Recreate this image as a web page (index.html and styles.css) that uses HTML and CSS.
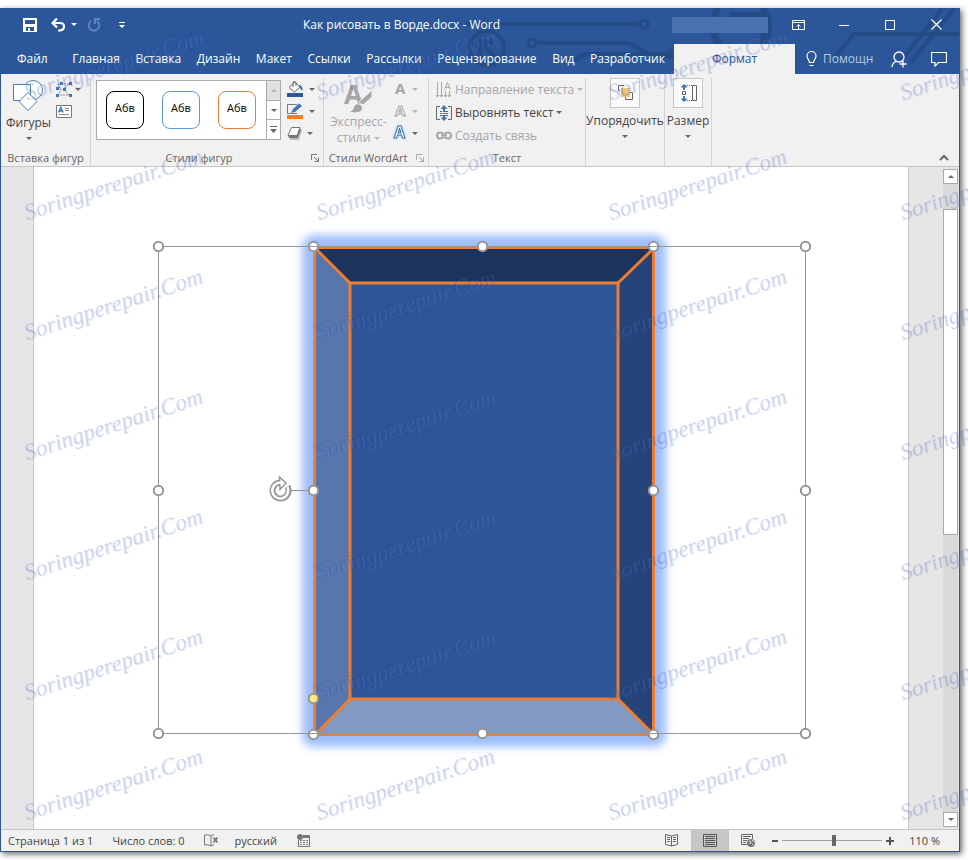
FILE: index.html
```html
<!DOCTYPE html>
<html lang="ru">
<head>
  <meta charset="UTF-8">
  <meta name="viewport" content="width=device-width, initial-scale=1.0">
  <title>Как рисовать в Ворде.docx - Word</title>
  <link rel="stylesheet" href="styles.css">
</head>
<body>
  <div class="window">

    <header class="header">
      <svg class="circuit" width="958" height="66" viewBox="1 8 958 66" fill="none" stroke="#244b86" stroke-width="4">
        <path d="M465 24H640M538 43H628L655 57H672M574 61Q580 54 592 54H672" />
        <circle cx="644" cy="24" r="4" stroke-width="3" />
        <circle cx="532" cy="43" r="4" stroke-width="3" />
        <circle cx="671" cy="54" r="4" stroke-width="3" />
        <circle cx="487" cy="48" r="17" />
        <path d="M480 56V42H494M480 42L496 58" stroke-width="5" />
        <path d="M718 8Q705 32 725 52M762 8Q775 26 762 44M729 16H764V42" stroke-width="7" />
        <path d="M835 57L854 34H960M900 62L942 9M911 62L954 9" />
      </svg>

      <div class="title-row">
        <div class="quick-access">
          <button class="qa-btn" aria-label="Сохранить">
            <svg width="14" height="14" viewBox="0 0 14 14"><path d="M0 0H14V14H0ZM2 2V6H12V2ZM3 9V13H5V10H7V13H11V9Z" fill="#fff" fill-rule="evenodd" /></svg>
          </button>
          <button class="qa-btn undo" aria-label="Отменить">
            <svg width="15" height="14" viewBox="0 0 15 14" fill="none" stroke="#fff" stroke-width="2.200"><path d="M2 5H9Q13 5 13 8.500T9 12.500H7M6 .5L1.500 5L6 9.500" /></svg>
            <i class="caret"></i>
          </button>
          <button class="qa-btn" aria-label="Повторить">
            <svg width="14" height="14" viewBox="0 0 14 14" fill="none" stroke="#5f83ba" stroke-width="2"><path d="M4 3A5.300 5.300 0 1 0 10 3M8 6V1H13" /></svg>
          </button>
          <button class="qa-btn more" aria-label="Настройка панели">
            <svg width="6" height="6" viewBox="0 0 6 6" fill="#fff"><path d="M0 0H6V1H0ZM0 3H6L3 6Z" /></svg>
          </button>
        </div>
        <h1 class="title">Как рисовать в Ворде.docx - Word</h1>
        <div class="account"></div>
        <div class="window-buttons">
          <button aria-label="Параметры ленты">
            <svg width="13" height="10" viewBox="0 0 13 10" fill="none" stroke="#fff"><path d="M.5 .5H12.500V9.500H.5ZM.5 2.500H12.500M6.500 9V4.500M4.500 6.500L6.500 4.500L8.500 6.500" /></svg>
          </button>
          <button aria-label="Свернуть">
            <svg width="10" height="10" viewBox="0 0 10 10" stroke="#fff"><path d="M0 5.500H10" /></svg>
          </button>
          <button aria-label="Развернуть">
            <svg width="10" height="10" viewBox="0 0 10 10" fill="none" stroke="#fff"><path d="M.5 .5H9.500V9.500H.5Z" /></svg>
          </button>
          <button aria-label="Закрыть">
            <svg width="11" height="11" viewBox="0 0 11 11" stroke="#fff" stroke-width="1.200"><path d="M.5 .5L10.500 10.500M10.500 .5L.5 10.500" /></svg>
          </button>
        </div>
      </div>

      <nav class="tab-row">
        <div class="tabs">
          <button class="tab file">Файл</button>
          <button class="tab">Главная</button>
          <button class="tab">Вставка</button>
          <button class="tab">Дизайн</button>
          <button class="tab">Макет</button>
          <button class="tab">Ссылки</button>
          <button class="tab">Рассылки</button>
          <button class="tab">Рецензирование</button>
          <button class="tab">Вид</button>
          <button class="tab">Разработчик</button>
        </div>
        <button class="tab active">Формат</button>
        <label class="tell-me">
          <svg width="11" height="16" viewBox="0 0 11 16" fill="none" stroke="#fff" stroke-width="1.200"><path d="M3.500 11.500C3.500 9 1 8 1 5A4.500 4.500 0 0 1 10 5C10 8 7.500 9 7.500 11.500ZM3.500 14.500H7.500" /></svg>
          <input type="text" placeholder="Помощн" aria-label="Помощник">
        </label>
        <button class="icon-btn" aria-label="Общий доступ">
          <svg width="16" height="17" viewBox="0 0 16 17" fill="none" stroke="#fff" stroke-width="1.300"><circle cx="8" cy="6" r="5" /><path d="M1 16Q1.500 11.500 5 10.500M10 10L11 11M12 9.500V16.500M8.500 13H15.500" /></svg>
        </button>
        <button class="icon-btn" aria-label="Примечания">
          <svg width="16" height="15" viewBox="0 0 16 15" fill="none" stroke="#fff" stroke-width="1.200"><path d="M.5 .5H15.500V10.500H7.500L4 14V10.500H.5Z" /></svg>
        </button>
      </nav>
    </header>

    <section class="ribbon">
      <div class="group insert-group">
        <div class="group-body">
          <button class="big-btn">
            <svg width="31" height="32" viewBox="0 0 31 32" stroke="#4a7fb5" fill="#fff"><circle cx="20" cy="10" r="9.500" /><path d="M.5 4.500H17.500V20.500H.5Z" /><path d="M15 12.500L24 21.500L15 30.500L6 21.500Z" /></svg>
            <span>Фигуры</span>
            <i class="caret"></i>
          </button>
          <div class="tool-column">
            <button class="tool" aria-label="Изменить фигуру">
              <svg width="16" height="15" viewBox="0 0 16 15"><path d="M2 2L13 2L8 7L13 13H2L5 8Z" fill="none" stroke="#888" stroke-dasharray="2 1" /><path d="M0 5H3V8H0ZM4 0H7V3H4ZM13 0H16V3H13ZM7 6H10V9H7ZM0 12H3V15H0ZM13 12H16V15H13Z" fill="#3b78b5" /></svg>
              <i class="caret"></i>
            </button>
            <button class="tool" aria-label="Надпись">
              <svg width="16" height="13" viewBox="0 0 16 13" fill="none"><path d="M.5 .5H15.500V12.500H.5Z" fill="#fff" stroke="#777" /><path d="M9 3.500H13M9 5.500H13M3 9.500H13" stroke="#888" /><path d="M2.500 7.500L4.800 2.500L7.200 7.500M3.500 6H6.500" stroke="#3b78b5" stroke-width="1.400" /></svg>
            </button>
          </div>
        </div>
        <div class="group-label">Вставка фигур</div>
      </div>

      <div class="group styles-group">
        <div class="group-body">
          <div class="gallery">
            <button class="style-tile black">Абв</button>
            <button class="style-tile blue">Абв</button>
            <button class="style-tile orange">Абв</button>
            <div class="gallery-scroll">
              <button class="disabled" aria-label="Вверх"><i class="caret up"></i></button>
              <button aria-label="Вниз"><i class="caret"></i></button>
              <button aria-label="Все стили"><svg width="7" height="7" viewBox="0 0 7 7" fill="#666"><path d="M0 0H7V1H0ZM0 3H7L3.500 7Z" /></svg></button>
            </div>
          </div>
          <div class="tool-column">
            <button class="tool" aria-label="Заливка фигуры">
              <svg width="17" height="16" viewBox="0 0 17 16"><path d="M2 6.500L8 1L13 6L7.500 11Z" fill="#fff" stroke="#666" /><path d="M6 6V1.500Q7.500 -.5 9 1.500V5" fill="none" stroke="#666" /><path d="M12 4Q16 4 15.500 10Q13 8 12 6Z" fill="#3b78b5" /><path d="M0 12H16V16H0Z" fill="#2b579a" /></svg>
              <i class="caret"></i>
            </button>
            <button class="tool" aria-label="Контур фигуры">
              <svg width="17" height="16" viewBox="0 0 17 16"><path d="M10 1.500H.5V10.500H10" fill="none" stroke="#777" /><path d="M4 10L6 6L12 .5L15 3L8 9Z" fill="#3b78b5" /><path d="M0 12H16V16H0Z" fill="#ed7d31" /></svg>
              <i class="caret"></i>
            </button>
            <button class="tool" aria-label="Эффекты фигуры">
              <svg width="15" height="14" viewBox="0 0 15 14"><path d="M5 3L15 4L12 14H3Z" fill="#bbb" /><path d="M1 9L2 12H10.500L14 4L13 1.500Z" fill="#777" /><path d="M4.500 1.500H13L10 9.500H1Z" fill="#fff" stroke="#777" stroke-linejoin="round" /></svg>
              <i class="caret"></i>
            </button>
          </div>
        </div>
        <div class="group-label"><span>Стили фигур</span>
          <button class="launcher" aria-label="Формат фигуры"><svg width="8" height="8" viewBox="0 0 8 8" fill="none" stroke="#777"><path d="M.5 6V.5H6M3 3L7 7M7.500 3.500V7.500H3.500" /></svg></button>
        </div>
      </div>

      <div class="group wordart-group">
        <div class="group-body">
          <button class="big-btn muted">
            <svg width="29" height="30" viewBox="0 0 29 30" fill="#a6a6a6"><text class="letter" x="0" y="20" font-size="27">A</text><path d="M28 6V13L19 21L15 18Z" stroke="#f1f1f1" /><path d="M5 28Q10 26 10 22Q13 18 17 21Q21 25 16 28Q11 30 5 28Z" stroke="#f1f1f1" /></svg>
            <span>Экспресс-</span>
            <span class="with-caret">стили <i class="caret"></i></span>
          </button>
          <div class="tool-column">
            <button class="tool muted" aria-label="Заливка текста"><svg width="14" height="16" viewBox="0 0 14 16" fill="#a6a6a6"><text class="letter" x="2" y="13" font-size="15">A</text></svg><i class="caret"></i></button>
            <button class="tool muted" aria-label="Контур текста"><svg width="14" height="16" viewBox="0 0 14 16" fill="#fff" stroke="#a6a6a6"><text class="letter" x="2" y="13" font-size="15">A</text></svg><i class="caret"></i></button>
            <button class="tool" aria-label="Эффекты текста"><svg width="14" height="16" viewBox="0 0 14 16"><text class="letter glow-letter" x="1" y="13" font-size="16" fill="#fff" stroke="#3b78b5">A</text></svg><i class="caret"></i></button>
          </div>
        </div>
        <div class="group-label"><span>Стили WordArt</span>
          <button class="launcher muted" aria-label="Формат текста"><svg width="8" height="8" viewBox="0 0 8 8" fill="none" stroke="#aaa"><path d="M.5 6V.5H6M3 3L7 7M7.500 3.500V7.500H3.500" /></svg></button>
        </div>
      </div>

      <div class="group text-group">
        <div class="group-body">
          <div class="tool-column">
            <button class="tool muted"><svg width="16" height="16" viewBox="0 0 16 16" fill="none" stroke="#a6a6a6"><path d="M1.500 0V15M5.500 0V15M0 13L1.500 15L3 13M4 13L5.500 15L7 13M9.500 9V15M13.500 9V15M8 13L9.500 15L11 13M12 13L13.500 15L15 13M8.500 7.500L11.500 .5L14.500 7.500M9.500 5.500H13.500" /></svg><span>Направление текста</span><i class="caret"></i></button>
            <button class="tool"><svg width="16" height="16" viewBox="0 0 16 16" fill="none"><path d="M4 1.500H.5V14.500H4M12 1.500H15.500V14.500H12M4 6.500H6M7 6.500H12M4 8.500H6M7 8.500H12M4 10.500H12" stroke="#666" /><path d="M8 0L11.500 4H9V6H7V4H4.500ZM8 16L11.500 12.500H9V11H7V12.500H4.500Z" fill="#3b78b5" /></svg><span>Выровнять текст</span><i class="caret"></i></button>
            <button class="tool muted"><svg width="16" height="10" viewBox="0 0 16 10" fill="none" stroke="#a6a6a6" stroke-width="2"><path d="M7.500 3Q6.500 1.500 4 1.500A3 3 0 0 0 4 7.500Q6.500 7.500 7.500 6M5 4.500H11M8.500 3Q9.500 1.500 12 1.500A3 3 0 0 1 12 7.500Q9.500 7.500 8.500 6" /></svg><span>Создать связь</span></button>
          </div>
        </div>
        <div class="group-label">Текст</div>
      </div>

      <div class="group arrange-group">
        <button class="big-btn">
          <svg class="boxed" width="30" height="30" viewBox="0 0 30 30" fill="none"><path d="M11 10H20V19H11Z" fill="#f0c377" /><path d="M14 7.500H8.500V12.500H10M20 14.500H22.500V21.500H15.500V19" stroke="#666" /></svg>
          <span>Упорядочить</span>
          <i class="caret"></i>
        </button>
      </div>

      <div class="group size-group">
        <button class="big-btn">
          <svg class="boxed" width="30" height="30" viewBox="0 0 30 30" fill="none"><path d="M19.500 7.500H23.500V22.500H19.500Z" stroke="#666" /><path d="M12 7.500H19M12 22.500H19" stroke="#666" stroke-dasharray="1 1" /><path d="M9.500 13.500H12.500V16.500H9.500Z" stroke="#666" /><path d="M11 6L14.500 9.500H12V12H10V9.500H7.500ZM11 24L14.500 20.500H12V18H10V20.500H7.500Z" fill="#3b78b5" /></svg>
          <span>Размер</span>
          <i class="caret"></i>
        </button>
      </div>

      <button class="collapse" aria-label="Свернуть ленту"><svg width="10" height="6" viewBox="0 0 10 6" fill="none" stroke="#666" stroke-width="2"><path d="M1 5L5 1L9 5" /></svg></button>
    </section>

    <main class="workspace">
      <div class="page">
        <svg class="drawing" viewBox="34 167 874 661" preserveAspectRatio="xMidYMin meet">
          <defs>
            <filter id="glow" x="-20%" y="-20%" width="140%" height="140%"><feGaussianBlur stdDeviation="4" /></filter>
          </defs>
          <rect x="302" y="235" width="364" height="512" rx="12" fill="#9dbdfb" filter="url(#glow)" />

          <!-- bevel sides -->
          <path d="M315 248H654L618 283H350Z" fill="#1c335b" />
          <path d="M315 248L350 283V699L315 735Z" fill="#5876ac" />
          <path d="M654 248V735L618 699V283Z" fill="#26437a" />
          <path d="M315 735L350 699H618L654 735Z" fill="#8299c2" />
          <rect x="350" y="283" width="268" height="416" fill="#2e5596" />
          <g fill="none" stroke="#ed7d31" stroke-width="3">
            <rect x="314.500" y="247.500" width="339" height="487" />
            <rect x="350" y="283" width="268" height="416" />
            <path d="M315 248L350 283M654 248L618 283M315 735L350 699M654 735L618 699" />
          </g>

          <!-- selection frame -->
          <g fill="none" stroke="#969696">
            <path d="M158.500 246.500H805.500V733.500H158.500Z" />
            <path d="M290 490.500H313" />
          </g>
          <g fill="#fff" stroke="#969696" stroke-width="2">
            <circle cx="158.500" cy="246.500" r="4.700" />
            <circle cx="805.500" cy="246.500" r="4.700" />
            <circle cx="158.500" cy="490.500" r="4.700" />
            <circle cx="805.500" cy="490.500" r="4.700" />
            <circle cx="158.500" cy="733.500" r="4.700" />
            <circle cx="805.500" cy="733.500" r="4.700" />
            <circle cx="313.500" cy="246.500" r="4.700" />
            <circle cx="482.500" cy="246.500" r="4.700" />
            <circle cx="653.500" cy="246.500" r="4.700" />
            <circle cx="313.500" cy="490.500" r="4.700" />
            <circle cx="653.500" cy="490.500" r="4.700" />
            <circle cx="313.500" cy="734.500" r="4.700" />
            <circle cx="482.500" cy="733.500" r="4.700" />
            <circle cx="653.500" cy="734.500" r="4.700" />
            <circle cx="313.500" cy="698.500" r="4.700" fill="#ffeb84" />
          </g>
          <path d="M309 246.500H318M649 246.500H658M309 733.500H318M649 733.500H658" stroke="#969696" />

          <!-- rotate handle -->
          <g fill="none">
            <path d="M287.500 486.500A8 8 0 1 1 280 482.500" stroke="#969696" stroke-width="6" />
            <path d="M279.500 477L286 483L280 489.500Z" fill="#fff" stroke="#969696" stroke-width="1.500" />
            <path d="M287.500 487A8 8 0 1 1 281 482.500" stroke="#fff" stroke-width="2.500" />
          </g>
        </svg>
      </div>
      <div class="scrollbar">
        <button aria-label="Прокрутить вверх"><i class="caret up"></i></button>
        <div class="track"><div class="thumb"></div></div>
        <button aria-label="Прокрутить вниз"><i class="caret"></i></button>
      </div>
    </main>

    <footer class="status">
      <span class="pages">Страница 1 из 1</span>
      <span class="words">Число слов: 0</span>
      <svg class="proof" width="15" height="13" viewBox="0 0 15 13" fill="none" stroke="#777"><path d="M7 2Q4 0 .5 1V11Q4 10 7 12V2Q8 1 10 .5M7 12L10 10.500" /><path d="M9.500 3.500L13.500 8.500M13.500 3.500L9.500 8.500" stroke-width="1.800" /></svg>
      <span class="lang">русский</span>
      <svg width="14" height="13" viewBox="0 0 14 13"><path d="M1.500 6V12.500H12.500V4" fill="none" stroke="#777" /><path d="M6 1H13V4H6Z" fill="#777" /><circle cx="3" cy="3" r="3" fill="#777" /><path d="M3 6.500H11M3 8.500H11M3 10.500H11" stroke="#777" stroke-dasharray="2 1" /></svg>
      <div class="views">
        <button aria-label="Режим чтения"><svg width="14" height="13" viewBox="0 0 14 13" fill="none" stroke="#666"><path d="M6.500 2L.5 .5V10.500L6.500 12V2L12.500 .5V10.500L6.500 12M2 3.500H5M2 5.500H5M2 7.500H5M8 3.500H11M8 5.500H11M8 7.500H11" /></svg></button>
        <button class="selected" aria-label="Разметка страницы"><svg width="14" height="13" viewBox="0 0 14 13" fill="none" stroke="#555"><path d="M.5 .5H13.500V12.500H.5ZM2 2.500H12M2 4.500H12M2 6.500H12M2 8.500H12M2 10.500H12" /></svg></button>
        <button aria-label="Веб-документ"><svg width="14" height="13" viewBox="0 0 14 13" fill="none" stroke="#666"><path d="M6 10.500H.5V.5H11.500V5M2 2.500H10M2 4.500H8M2 6.500H6M2 8.500H5" /><circle cx="10" cy="9" r="4" fill="#777" stroke="none" /><path d="M8 7L10 8L9 10M11 6L13 8M11 10L12 11" stroke="#f1f1f1" /></svg></button>
      </div>
      <button class="zoom-btn" aria-label="Уменьшить"><svg width="8" height="8" viewBox="0 0 8 8" stroke="#555" stroke-width="2"><path d="M1 4H7" /></svg></button>
      <input class="zoom-slider" type="range" min="10" max="212" value="114" aria-label="Масштаб">
      <button class="zoom-btn" aria-label="Увеличить"><svg width="8" height="8" viewBox="0 0 8 8" stroke="#555" stroke-width="2"><path d="M0 4H8M4 0V8" /></svg></button>
      <span class="zoom-value">110 %</span>
    </footer>
  </div>

  <div class="watermarks" aria-hidden="true"></div>

  <script>
    // repeat the site mark over the whole screen
    const layer = document.querySelector('.watermarks');
    for (let i = 0; i < 28; i++) {
      const mark = document.createElement('span');
      mark.textContent = 'Soringperepair.Com';
      layer.appendChild(mark);
    }
  </script>
</body>
</html>
```

FILE: styles.css
```css
* {
  margin: 0;
  padding: 0;
  box-sizing: border-box;
}

body {
  font-family: 'Open Sans', 'Noto Sans', sans-serif;
  font-size: 12px;
  line-height: 16px;
  color: #444;
  background: #fff;
  height: 100vh;
  padding: 8px 8px 8px 0;
  overflow: hidden;
  position: relative;
}

button {
  font: inherit;
  color: inherit;
  background: none;
  border: none;
  display: flex;
  align-items: center;
  justify-content: center;
  white-space: nowrap;
}

svg {
  display: block;
  flex: none;
}

.window {
  height: 100%;
  display: flex;
  flex-direction: column;
  border: 1px solid #2b579a;
  background: #f1f1f1;
  box-shadow: 2px 2px 6px rgba(0, 0, 0, 0.6);
}

.caret {
  width: 0;
  height: 0;
  flex: none;
  border: 3px solid transparent;
  border-top-color: #666;
  border-bottom: 0;
}

.caret.up {
  border-top: 0;
  border-bottom: 3px solid #666;
}

.muted {
  color: #a6a6a6;
}

.muted .caret {
  border-top-color: #b5b5b5;
}

.ribbon svg {
  overflow: visible;
}

.letter {
  font-family: 'Open Sans', sans-serif;
  font-weight: bold;
}

.glow-letter {
  filter: drop-shadow(0 0 1px #8ab8ea);
}

/* header */
.header {
  position: relative;
  background: #2b579a;
  color: #fff;
}

.circuit {
  position: absolute;
  left: 0;
  top: -1px;
}

.title-row,
.tab-row {
  position: relative;
  display: flex;
}

.title-row {
  height: 35px;
  align-items: center;
  padding-bottom: 4px;
}

.quick-access {
  display: flex;
  align-items: center;
  padding-left: 22px;
  gap: 14px;
}

.undo {
  gap: 5px;
  margin-right: -4px;
}

.quick-access .caret {
  border-top-color: #fff;
}

.more {
  margin-left: 4px;
}

.title {
  flex: 1;
  padding-left: 6px;
  font-size: 12px;
  font-weight: normal;
  text-align: center;
}

.account {
  width: 96px;
  height: 16px;
  margin-right: 7px;
  background: #4a71ae;
}

.window-buttons {
  display: flex;
}

.window-buttons button {
  width: 46px;
  height: 31px;
}

.tab-row {
  height: 30px;
  align-items: center;
}

.tabs {
  flex: 1;
  display: flex;
  justify-content: space-between;
  padding: 0 9px 0 16px;
}

.tab.file {
  margin-right: 9px;
}

.tab.active {
  width: 121px;
  height: 30px;
  background: #f1f1f1;
  color: #2b579a;
}

.tell-me {
  display: flex;
  align-items: center;
  gap: 6px;
  padding-left: 11px;
}

.tell-me input {
  width: 56px;
  font: inherit;
  background: none;
  border: none;
  color: #fff;
}

.tell-me input::placeholder {
  color: #b8c8e0;
}

.icon-btn {
  width: 40px;
}

/* ribbon */
.ribbon {
  height: 93px;
  display: flex;
  padding-top: 4px;
  border-bottom: 1px solid #c6c6c6;
}

.group {
  display: flex;
  flex-direction: column;
  justify-content: space-between;
  border-right: 1px solid #d4d4d4;
}

.group-body {
  display: flex;
}

.group-label {
  display: flex;
  justify-content: center;
  font-size: 11px;
  color: #666;
  white-space: nowrap;
}

.group-label span {
  flex: 1;
  text-align: center;
}

.launcher {
  width: 16px;
}

.insert-group {
  width: 90px;
}

.styles-group {
  width: 233px;
}

.wordart-group {
  width: 105px;
}

.text-group {
  width: 157px;
}

.arrange-group {
  width: 79px;
}

.size-group {
  width: 47px;
}

.big-btn {
  flex-direction: column;
  justify-content: flex-start;
}

.big-btn .caret {
  margin-top: 6px;
}

.arrange-group .big-btn span,
.size-group .big-btn span {
  margin-top: 5px;
}

.boxed {
  background: #fafafa;
  outline: 1px solid #c6c6c6;
  outline-offset: -1px;
}

.insert-group .big-btn {
  width: 55px;
  padding-top: 2px;
}

.insert-group .big-btn span {
  margin-top: 3px;
}

.wordart-group .big-btn {
  width: 69px;
  padding-top: 6px;
}

.wordart-group .big-btn .with-caret .caret {
  margin-top: 0;
}

.with-caret {
  display: flex;
  align-items: center;
  gap: 4px;
}

.tool-column {
  display: flex;
  flex-direction: column;
}

.tool {
  height: 22px;
  gap: 3px;
  justify-content: flex-start;
}

.styles-group .tool,
.wordart-group .tool {
  gap: 5px;
}

.text-group .tool {
  height: 23px;
}

.gallery {
  display: flex;
  align-items: center;
  gap: 18px;
  height: 60px;
  margin: 2px 6px 0 5px;
  padding-left: 9px;
  border: 1px solid #ababab;
  background: #fff;
}

.style-tile {
  width: 38px;
  height: 38px;
  border: 1px solid #000;
  border-radius: 8px;
  font-size: 11px;
  color: #000;
  padding-bottom: 4px;
}

.style-tile.blue {
  border-color: #5b9bd5;
}

.style-tile.orange {
  border-color: #ed7d31;
}

.gallery-scroll {
  align-self: stretch;
  display: flex;
  flex-direction: column;
  width: 14px;
  margin-left: -8px;
  border-left: 1px solid #ababab;
}

.gallery-scroll button {
  flex: 1;
}

.gallery-scroll button + button {
  border-top: 1px solid #ababab;
}

.gallery-scroll .disabled {
  background: #e1e1e1;
}

.disabled .caret.up {
  border-bottom-color: #b5b5b5;
}

.text-group .group-body {
  padding-left: 7px;
}

.collapse {
  margin: 0 0 4px auto;
  align-self: flex-end;
  width: 30px;
  height: 9px;
}

/* document */
.workspace {
  flex: 1;
  min-height: 0;
  display: flex;
  padding-left: 32px;
  background: #e6e6e6;
}

.page {
  flex: 1;
  min-width: 0;
  margin-right: 34px;
  background: #fff;
  border: solid #c6c6c6;
  border-width: 0 1px;
}

.drawing {
  width: 100%;
  height: 100%;
}

.scrollbar {
  width: 16px;
  display: flex;
  flex-direction: column;
  padding: 2px 1px 2px 0;
}

.scrollbar button {
  height: 15px;
  background: #fff;
  border: 1px solid #ababab;
}

.track {
  flex: 1;
  padding-top: 25px;
  background: #dadada;
}

.thumb {
  height: 54%;
  background: #fff;
  border: 1px solid #ababab;
}

/* status bar */
.status {
  height: 22px;
  display: flex;
  align-items: center;
  padding: 0 19px 0 7px;
  border-top: 1px solid #c6c6c6;
  font-size: 11px;
  white-space: nowrap;
}

.words {
  margin: 0 19px;
}

.lang {
  margin: 0 20px 0 16px;
}

.views {
  display: flex;
  align-self: stretch;
  margin-left: auto;
}

.views button {
  width: 38px;
}

.views .selected {
  background: #c6c6c6;
}

.zoom-btn {
  width: 15px;
}

.zoom-slider {
  appearance: none;
  width: 100px;
  height: 12px;
  background: linear-gradient(#a0a0a0, #a0a0a0) center / 100% 1px no-repeat;
}

.zoom-slider::-webkit-slider-thumb {
  appearance: none;
  width: 4px;
  height: 11px;
  background: #666;
}

.zoom-value {
  margin-left: 12px;
}

/* site mark layer */
.watermarks {
  position: absolute;
  inset: 0;
  overflow: hidden;
  pointer-events: none;
  display: grid;
  grid-template-columns: repeat(4, 292px);
  grid-auto-rows: 120px;
  padding: 52px 0 0 20px;
}

.watermarks span {
  width: 192px;
  height: 24px;
  font: italic 23px/24px 'Liberation Serif', serif;
  color: rgba(20, 30, 130, 0.18);
  text-shadow: 1px 1px 1px rgba(130, 170, 250, 0.18);
  transform: rotate(-18deg);
  white-space: nowrap;
}
```
